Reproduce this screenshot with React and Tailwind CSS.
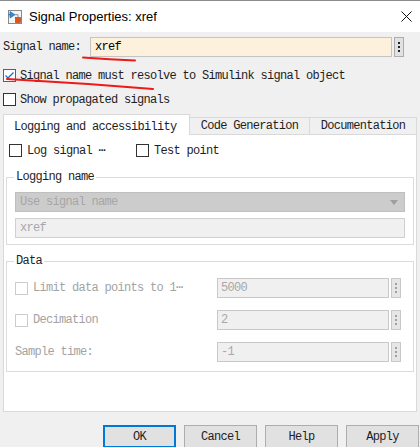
import React from 'react';

const mono = "font-['Liberation_Mono','DejaVu_Sans_Mono',monospace] text-[12px] tracking-[-0.7px]";

// small windows style checkbox
const Check = ({ checked = false, disabled = false }) => (
    <span
        className={`w-[13px] h-[13px] shrink-0 bg-white border flex items-center justify-center ${
            checked ? 'border-[#0078d7]' : disabled ? 'border-[#cccccc]' : 'border-[#333333]'
        }`}
    >
        {checked && (
            <svg width="11" height="11" viewBox="0 0 11 11">
                <path d="M1.5 5.5 L4 8 L9.5 2.5" fill="none" stroke="#0078d7" strokeWidth="1.3" />
            </svg>
        )}
    </span>
);

// the little "⋮" button next to edit fields
const DotsButton = ({ disabled = false }) => (
    <div
        className={`w-[10px] h-full ml-[2px] border flex flex-col items-center justify-center gap-[2px] ${
            disabled ? 'border-[#c8c8c8] bg-[#e6e6e6]' : 'border-[#adadad] bg-[#e1e1e1]'
        }`}
    >
        <span className={`w-[2px] h-[2px] ${disabled ? 'bg-[#a0a0a0]' : 'bg-[#222]'}`} />
        <span className={`w-[2px] h-[2px] ${disabled ? 'bg-[#a0a0a0]' : 'bg-[#222]'}`} />
        <span className={`w-[2px] h-[2px] ${disabled ? 'bg-[#a0a0a0]' : 'bg-[#222]'}`} />
    </div>
);

const DataRow = ({ label, value, checkbox = true }) => (
    <div className="flex items-center h-[20px]">
        <div className="w-[202px] flex items-center">
            {checkbox && <Check disabled />}
            <span className={`${checkbox ? 'ml-[5px]' : ''} text-[#a3a3a3] whitespace-nowrap`}>{label}</span>
        </div>
        <div className="w-[172px] h-full bg-[#f0f0f0] border border-[#c8c8c8] flex items-center pl-[3px] text-[#a8a8a8]">
            {value}
        </div>
        <DotsButton disabled />
    </div>
);

const Btn = ({ children, primary = false }) => (
    <div
        className={`w-[73px] h-[23px] bg-[#e1e1e1] flex items-center justify-center text-[#1e1e1e] ${
            primary ? 'border-2 border-[#0078d7]' : 'border border-[#adadad]'
        }`}
    >
        {children}
    </div>
);

export default function App() {
    return (
        <div className={`relative w-[420px] h-[447px] overflow-hidden bg-[#f0f0f0] text-[#1e1e1e] ${mono}`}>
            {/* Title bar */}
            <div className="h-[32px] bg-white border-t border-[#8c8c8c] flex items-center pl-[8px] pr-[8px] tracking-normal">
                <svg width="14" height="14" viewBox="0 0 14 14">
                    <rect x="0.5" y="0.5" width="13" height="13" fill="#f4f4f4" stroke="#8a8a8a" />
                    <path d="M2 1.5 L2 8 L7 4.7 Z" fill="#2f8fd8" stroke="#1d5f9e" strokeWidth="0.6" />
                    <line x1="0.5" y1="4.7" x2="2" y2="4.7" stroke="#1d5f9e" />
                    <rect x="7.5" y="7.5" width="5" height="5" fill="#e0531c" stroke="#a3360c" strokeWidth="0.6" />
                    <path d="M7 4.7 L10 4.7 L10 7.5" fill="none" stroke="#777" strokeWidth="0.8" />
                </svg>
                <span className="ml-[7px] font-['Liberation_Sans',Arial,sans-serif] text-[13px] text-black">
                    Signal Properties: xref
                </span>
                <svg className="ml-auto" width="11" height="11" viewBox="0 0 11 11">
                    <path d="M0.5 0.5 L10.5 10.5 M10.5 0.5 L0.5 10.5" stroke="#111" strokeWidth="1" />
                </svg>
            </div>

            {/* Signal name */}
            <div className="mt-[5px] h-[20px] flex items-center pl-[3px]">
                <span className="w-[87px]">Signal name:</span>
                <div className="w-[302px] h-full bg-[#fdf0dc] border border-[#c4c4c4] flex items-center pl-[4px] text-black">
                    xref
                </div>
                <DotsButton />
            </div>

            <div className="mt-[12px] h-[13px] flex items-center pl-[3px]">
                <Check checked />
                <span className="ml-[4px]">Signal name must resolve to Simulink signal object</span>
            </div>
            <div className="mt-[11px] h-[13px] flex items-center pl-[3px]">
                <Check />
                <span className="ml-[4px]">Show propagated signals</span>
            </div>

            {/* Tabs */}
            <div className="mt-[8px] ml-[3px] h-[21px] flex items-end">
                <div className="w-[187px] h-[21px] bg-white border border-b-0 border-[#d9d9d9] pl-[10px] pt-[3px]">
                    Logging and accessibility
                </div>
                <div className="w-[120px] h-[18px] bg-[#f0f0f0] border border-l-0 border-[#d9d9d9] flex items-center justify-center">
                    Code Generation
                </div>
                <div className="w-[107px] h-[18px] bg-[#f0f0f0] border border-l-0 border-[#d9d9d9] flex items-center justify-center">
                    Documentation
                </div>
            </div>

            {/* Tab panel */}
            <div className="ml-[3px] w-[414px] h-[277px] bg-white border border-t-0 border-[#d9d9d9] px-[2px] pt-[9px]">
                <div className="h-[13px] flex items-center pl-[3px]">
                    <div className="w-[127px] flex items-center">
                        <Check />
                        <span className="ml-[5px]">Log signal ⋯</span>
                    </div>
                    <Check />
                    <span className="ml-[5px]">Test point</span>
                </div>

                <fieldset className="mt-[13px] w-[408px] border border-[#dcdcdc] px-[8px] pb-[6px]">
                    <legend className="ml-[-1px] px-[2px] leading-[14px]">Logging name</legend>
                    <div className="mt-[8px] h-[20px] bg-[#cccccc] border border-[#bfbfbf] flex items-center pl-[4px] text-[#a6a6a6]">
                        <span>Use signal name</span>
                        <svg className="ml-auto mr-[6px]" width="8" height="5" viewBox="0 0 8 5">
                            <path d="M0 0 L8 0 L4 5 Z" fill="#9e9e9e" />
                        </svg>
                    </div>
                    <div className="mt-[6px] h-[20px] bg-[#f0f0f0] border border-[#d0d0d0] flex items-center pl-[4px] text-[#a8a8a8]">
                        xref
                    </div>
                </fieldset>

                <fieldset className="mt-[9px] w-[408px] border border-[#dcdcdc] px-[8px] pb-[9px]">
                    <legend className="ml-[-1px] px-[2px] leading-[14px]">Data</legend>
                    <div className="mt-[10px] flex flex-col gap-[12px]">
                        <DataRow label="Limit data points to 1⋯" value="5000" />
                        <DataRow label="Decimation" value="2" />
                        <DataRow label="Sample time:" value="-1" checkbox={false} />
                    </div>
                </fieldset>
            </div>

            {/* Buttons */}
            <div className="mt-[13px] pl-[103px] flex gap-[8px]">
                <Btn primary>OK</Btn>
                <Btn>Cancel</Btn>
                <Btn>Help</Btn>
                <Btn>Apply</Btn>
            </div>

            {/* red pen annotations */}
            <svg className="absolute left-0 top-0 pointer-events-none" width="420" height="447">
                <path d="M83 57.5 Q110 59.5 135 60.5" fill="none" stroke="#f01818" strokeWidth="2" strokeLinecap="round" />
                <path d="M7 79 Q80 83 153 89" fill="none" stroke="#f01818" strokeWidth="2" strokeLinecap="round" />
            </svg>
        </div>
    );
}
